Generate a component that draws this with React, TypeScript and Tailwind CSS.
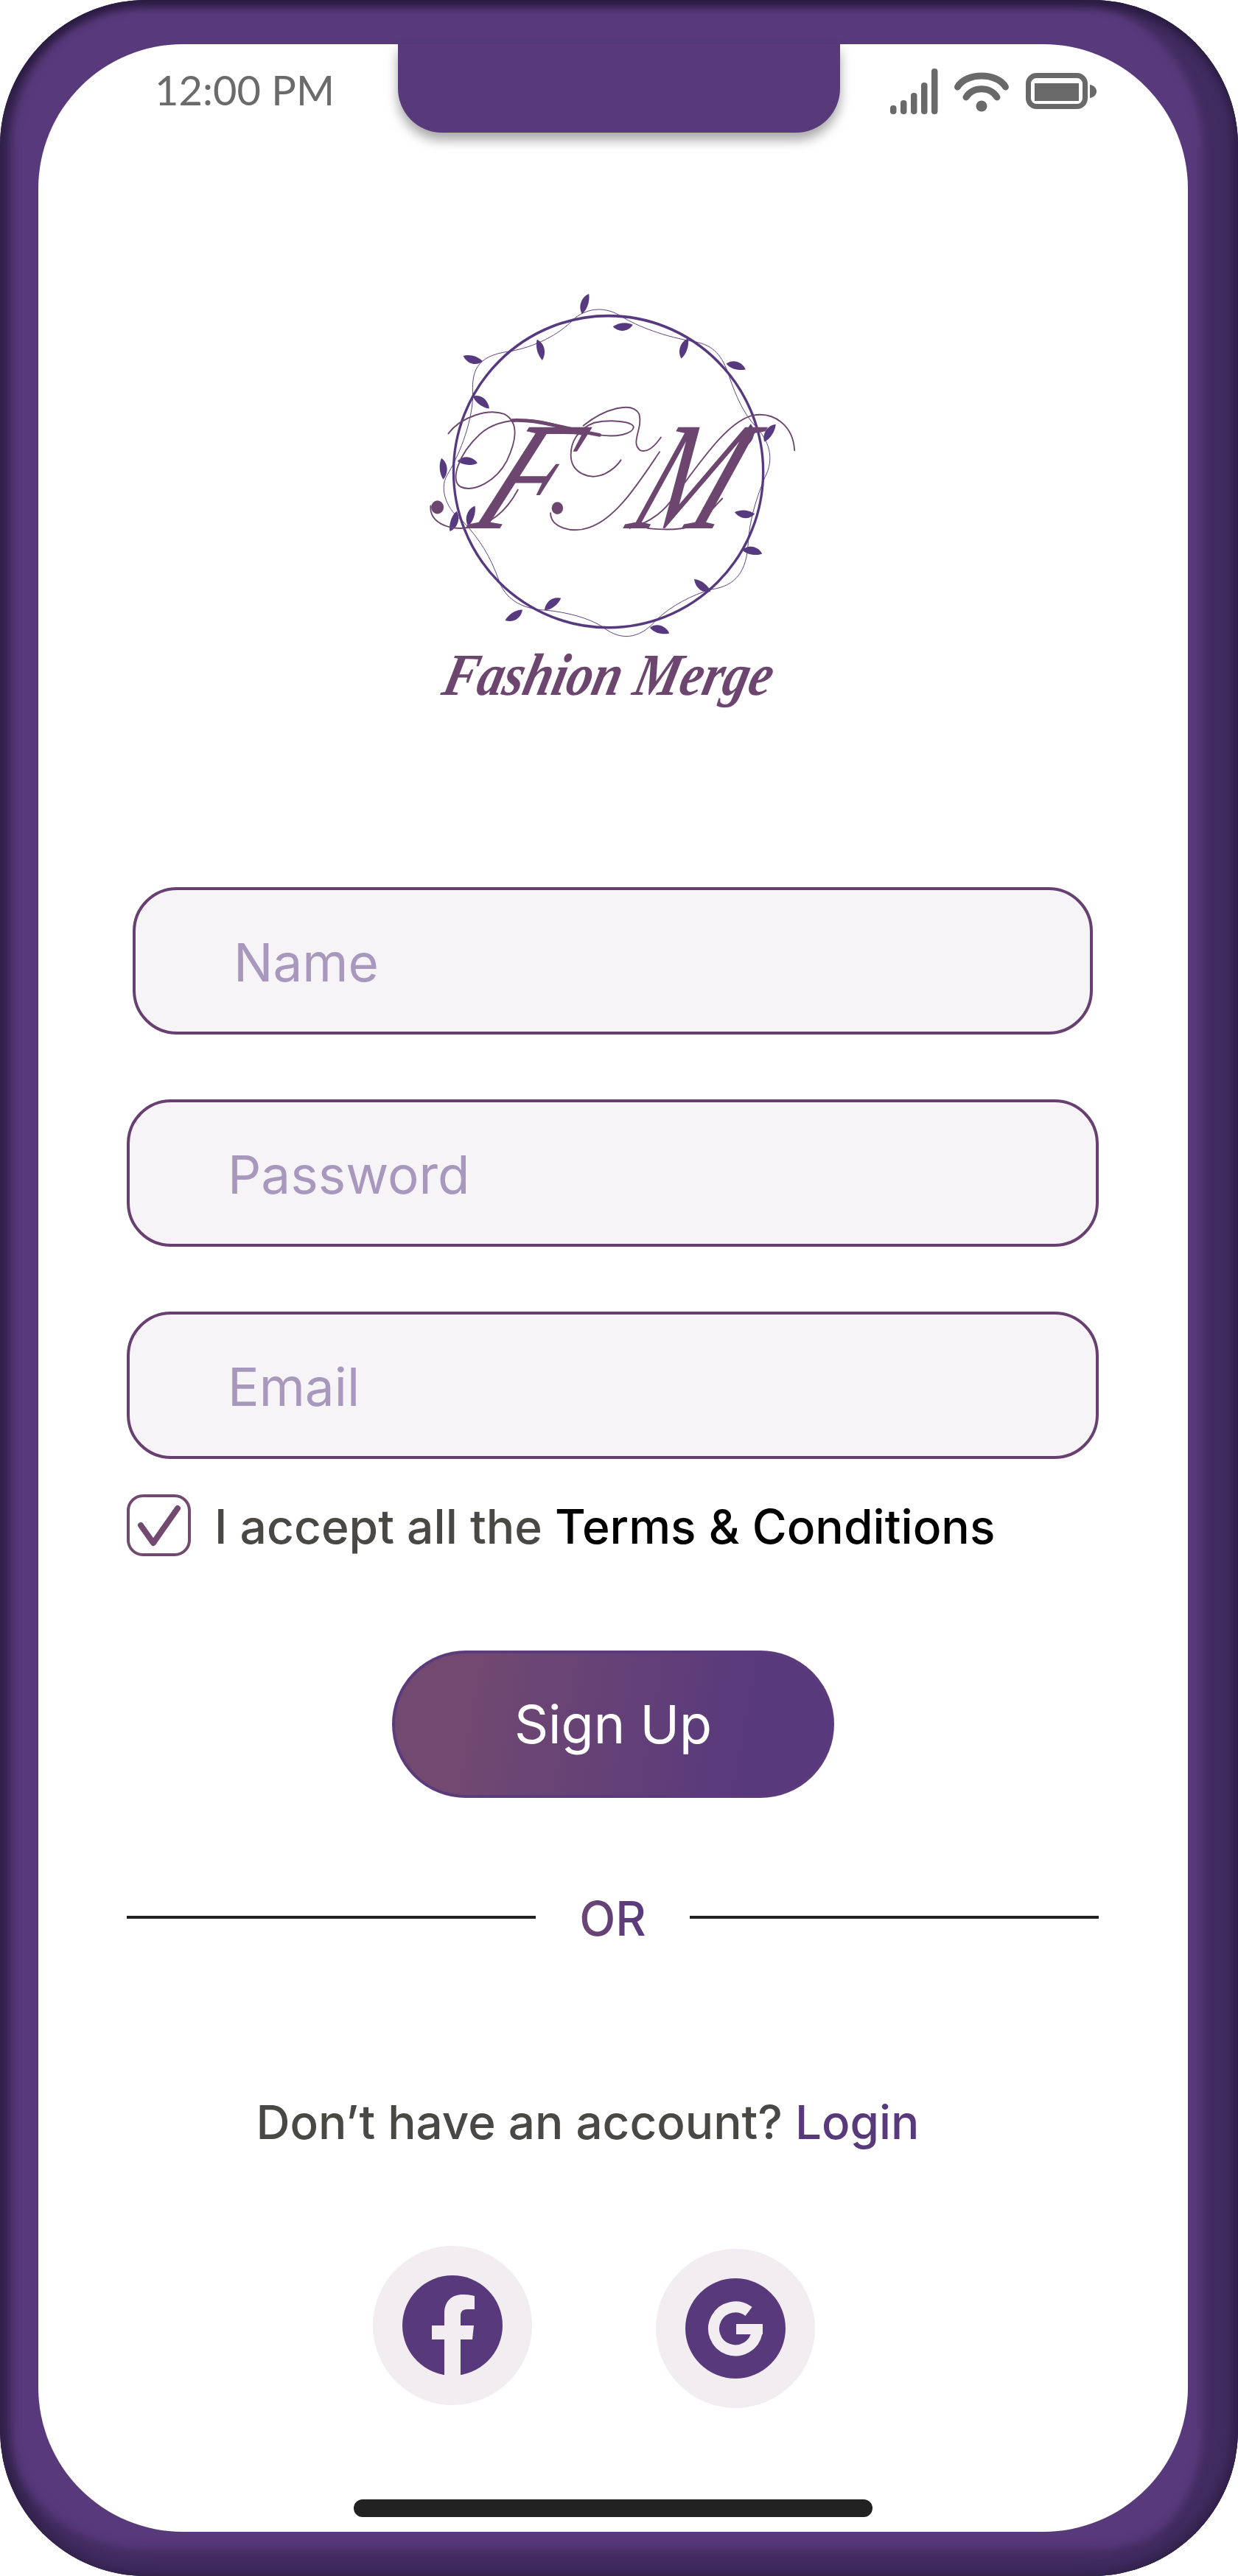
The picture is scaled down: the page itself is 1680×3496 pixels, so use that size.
import React from "react";

const leaves: [number, number, number][] = [
  [688, 82, -70], [825, 157, 175], [520, 240, 75], [1052, 235, -70], [275, 270, 195],
  [1240, 297, 15], [305, 420, 35], [1288, 530, 100], [1365, 525, -55], [163, 648, 85],
  [255, 625, 5], [270, 810, -70], [203, 828, 110], [1272, 800, 185], [1300, 933, 10],
  [1117, 1048, 215], [568, 1113, -35], [425, 1150, 150], [960, 1203, 15],
];

function Logo() {
  return (
    <svg viewBox="0 0 1568 1568" preserveAspectRatio="none" className="w-[580px] h-[620px] ml-[488px] block">
      <ellipse cx="772" cy="658" rx="568" ry="535" fill="none" stroke="#57397f" strokeWidth="9" />
      <path
        d="M650 130C700 95 760 90 820 125C880 160 980 195 1090 212C1160 225 1190 260 1215 330C1240 400 1270 460 1310 500C1360 550 1385 610 1345 680C1310 760 1290 830 1285 900C1280 1000 1240 1050 1150 1062C1080 1080 1000 1120 950 1165C900 1220 830 1250 750 1190C700 1160 620 1140 540 1133C450 1130 390 1090 370 1030C340 950 300 890 240 830C180 790 150 720 180 670C220 610 270 500 275 400C270 320 280 260 410 245C500 230 590 190 650 130Z"
        fill="none"
        stroke="#57397f"
        strokeWidth="2.5"
      />
      {leaves.map(([x, y, r], i) => (
        <path
          key={i}
          transform={`translate(${x} ${y}) rotate(${r}) scale(1.15)`}
          d="M-32 0C-16-20 14-20 32 0C14 11-16 11-32 0Z"
          fill="#57397f"
        />
      ))}
      {/* monogram */}
      <text transform="translate(250 852) skewX(-28) scale(0.85 1)" fontSize="530" fill="#6d4670" className="font-['Liberation_Serif'] italic">F</text>
      <text transform="translate(830 852) skewX(-24) scale(0.8 1)" fontSize="530" fill="#6d4670" className="font-['Liberation_Serif'] italic">M</text>
      <g fill="none" stroke="#6d4670" strokeWidth="5" strokeLinecap="round">
        <path d="M185 527C230 470 330 440 390 460C450 490 430 560 400 620C360 690 280 730 230 710C190 690 220 600 300 530C340 495 400 480 470 480" />
        <path d="M470 480C560 482 640 520 740 532C800 540 860 530 865 505C860 485 780 478 720 490C660 510 630 560 635 610C640 660 700 690 760 665C790 650 810 630 818 618" />
        <path d="M420 482C520 478 620 512 740 532" strokeWidth="12" />
        <path d="M680 500C760 440 860 415 885 460C900 510 850 560 890 585C920 595 950 560 965 540" />
        <path d="M120 775C115 830 180 860 260 850C340 840 400 790 440 720" />
        <path d="M560 800C560 850 640 870 700 850C800 820 880 700 960 590" />
        <path d="M1455 585C1450 500 1380 450 1300 465C1200 490 1100 640 1000 760C960 810 900 840 850 852" />
        <path d="M915 852C1000 860 1090 860 1130 810L1190 750" />
      </g>
      <circle cx="145" cy="780" r="23" fill="#6d4670" />
      <circle cx="585" cy="783" r="21" fill="#6d4670" />
      <text
        transform="translate(155 1425) skewX(-14)"
        fontSize="205"
        textLength="1205"
        lengthAdjust="spacingAndGlyphs"
        fill="#6d4670"
        className="font-['Liberation_Serif'] italic font-bold"
      >
        Fashion Merge
      </text>
    </svg>
  );
}

function StatusIcons() {
  return (
    <svg viewBox="0 0 280 62" className="w-[280px] h-[62px] mt-[33px] mr-[124px] block" fill="#696969">
      <rect x="0" y="50" width="8.5" height="12" rx="4" />
      <rect x="14" y="43" width="8.5" height="19" rx="4" />
      <rect x="28" y="33" width="8.5" height="29" rx="4" />
      <rect x="42" y="19" width="8.5" height="43" rx="4" />
      <rect x="56" y="0" width="8.5" height="62" rx="4" />
      <g fill="none" stroke="#696969" strokeWidth="9" strokeLinecap="round">
        <path d="M91.5 25C103 5 145 5 156.5 25" />
        <path d="M103 39C112 24 136 24 145 39" />
      </g>
      <circle cx="124" cy="51" r="7.5" />
      <rect x="187.5" y="9.5" width="77" height="42" rx="11" fill="none" stroke="#696969" strokeWidth="7" />
      <rect x="196" y="20" width="60" height="24" />
      <path d="M271 22C277 23 280 27 280 31C280 35 277 39 271 40Z" />
    </svg>
  );
}

function Field({ label, inset }: { label: string; inset?: boolean }) {
  return (
    <div
      className={`h-[200px] rounded-[60px] border-[4px] border-[#673f70] bg-[#f6f4f7] flex items-center text-[71px] text-[#a898bd] font-['Inter'] pl-[133px] pt-[4px] ${inset ? "mx-[8px]" : ""}`}
    >
      {label}
    </div>
  );
}

export default function App() {
  return (
    <div className="w-[1680px] h-[3496px] bg-white">
      <div className="h-full rounded-[198px] bg-[#583a7c] pl-[52px] pr-[68px] pt-[60px] pb-[60px] shadow-[inset_0_14px_12px_-4px_#2b1c42,inset_18px_0_14px_-4px_#33224c,inset_-12px_-8px_14px_-4px_#33224c,inset_-50px_0_12px_-2px_#412c60,inset_0_-38px_14px_-2px_#412c60]">
        <div className="relative h-full rounded-[196px] bg-white">
          {/* notch */}
          <div className="absolute left-[488px] top-0 w-[600px] h-[120px] rounded-b-[60px] bg-[#58397a] shadow-[0_10px_16px_rgba(0,0,0,0.35)]" />

          <div className="h-[320px] flex items-start justify-between">
            <span className="ml-[158px] mt-[30px] text-[56px] leading-[64px] text-[#6b6b6b] font-['Lato']">12:00 PM</span>
            <StatusIcons />
          </div>

          <Logo />

          <div className="ml-[120px] w-[1319px] mt-[204px] flex flex-col">
            <Field label="Name" inset />
            <div className="mt-[88px]"><Field label="Password" /></div>
            <div className="mt-[88px]"><Field label="Email" /></div>

            <div className="mt-[48px] h-[84px] flex items-center">
              <div className="w-[87px] h-[84px] rounded-[22px] border-[4px] border-[#724a70] relative shrink-0">
                <svg viewBox="0 0 87 84" className="absolute -left-[4px] -top-[4px] w-[87px] h-[84px]" fill="none" stroke="#724a70" strokeWidth="8" strokeLinecap="round" strokeLinejoin="round">
                  <path d="M19 42L36 66L69 19" />
                </svg>
              </div>
              <p className="ml-[32px] pt-[4px] text-[64.1px] font-medium text-[#4a4845] font-['Inter'] whitespace-nowrap">
                I accept all the <span className="text-black">Terms &amp; Conditions</span>
              </p>
            </div>

            <div className="mt-[128px] ml-[360px] w-[600px] h-[200px] rounded-[100px] border-[4px] border-[#5c3b7c] bg-[linear-gradient(100deg,#724a70_15%,#58397c_80%)] flex items-center justify-center text-[72px] text-white font-['Inter']">
              Sign Up
            </div>

            <div className="mt-[120px] h-[80px] flex items-center">
              <div className="w-[555px] h-[4px] mt-[3px] bg-[#222]" />
              <div className="flex-1 flex justify-center pt-[8px]">
                <span className="text-[64px] font-medium bg-gradient-to-r from-[#6d4670] to-[#57397f] bg-clip-text text-transparent font-['Inter']">OR</span>
              </div>
              <div className="w-[555px] h-[4px] mt-[3px] bg-[#222]" />
            </div>

            <p className="mt-[200px] h-[80px] pr-[68px] flex items-center justify-center text-[63.8px] font-medium text-[#4a4845] font-['Inter'] whitespace-pre">
              Don’t have an account? <span className="text-[#58397c]">Login</span>
            </p>

            <div className="mt-[128px] h-[220px] ml-[334px] flex items-start gap-[168px]">
              <div className="w-[216px] h-[216px] rounded-full bg-[#f1edf1] flex items-center justify-center">
                <svg viewBox="0 0 136 136" className="w-[136px] h-[136px]">
                  <circle cx="68" cy="68" r="68" fill="#58397c" />
                  <path d="M57 136V87H40V68H57V52C57 35 67 26 82 26C89 26 95 27 98 28V46H88C81 46 79 50 79 55V68H97L95 87H79V136Z" fill="#f1edf1" />
                </svg>
              </div>
              <div className="mt-[4px] w-[216px] h-[216px] rounded-full bg-[#f1edf1] flex items-center justify-center">
                <svg viewBox="0 0 136 136" className="w-[136px] h-[136px]">
                  <circle cx="68" cy="68" r="68" fill="#58397c" />
                  <path d="M86 45A29.5 29.5 0 1 0 97 74" fill="none" stroke="#f1edf1" strokeWidth="15" />
                  <rect x="69" y="62" width="36" height="14" fill="#f1edf1" />
                </svg>
              </div>
            </div>

            <div className="mt-[124px] ml-[308px] w-[704px] h-[24px] rounded-[12px] bg-[#232222]" />
          </div>
        </div>
      </div>
    </div>
  );
}
